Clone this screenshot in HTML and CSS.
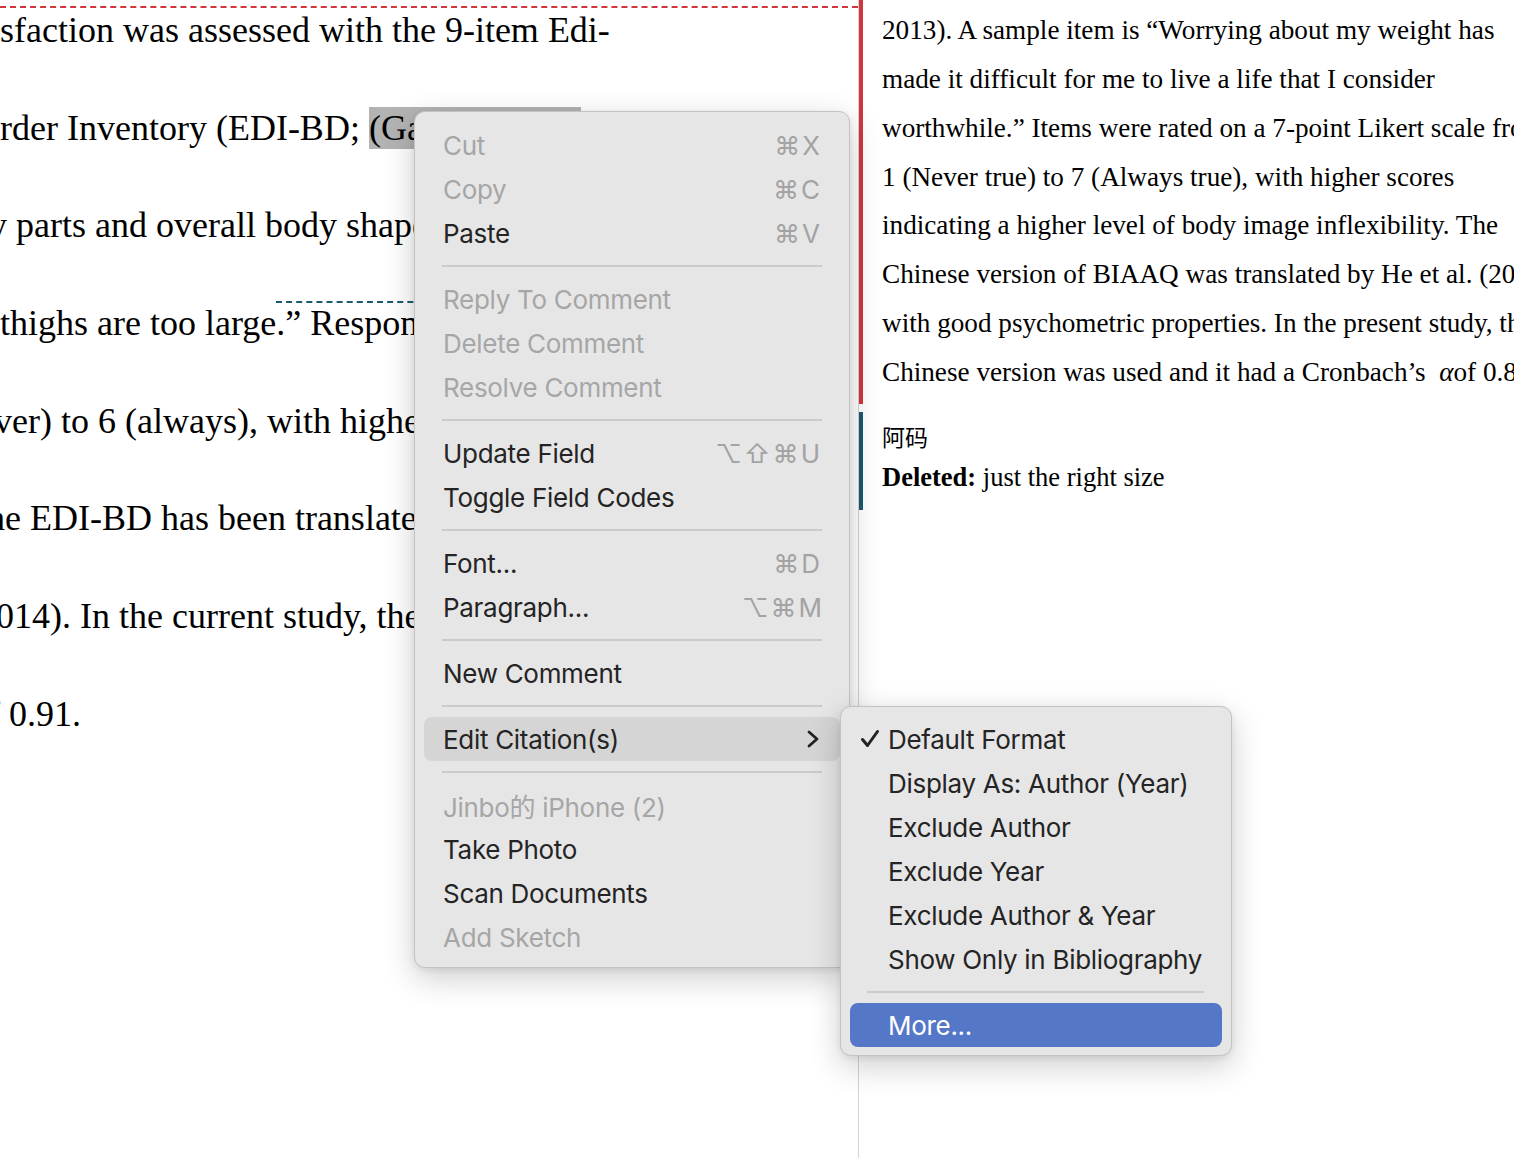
FILE: index.html
```html
<!DOCTYPE html>
<html>
<head>
<meta charset="utf-8">
<link rel="stylesheet" href="styles.css">
</head>
<body>
<div class="doc">
  <div class="left">
    <div class="connector"></div>
    <div class="lines">
      <div class="ln l1">sfaction was assessed with the 9-item Edi-</div>
      <div class="ln l2">rder Inventory (EDI-BD; <span class="sel">(Garner, 2004)</span>. The subscale</div>
      <div class="ln l3">y parts and overall body shape</div>
      <div class="ln l4">thighs are too large<span class="anchor">.” Respondents rated</span></div>
      <div class="ln l5">ver) to 6 (always), with higher scores</div>
      <div class="ln l6">he EDI-BD has been translated</div>
      <div class="ln l7">014). In the current study, the</div>
      <div class="ln l8">f 0.91.</div>
    </div>
  </div>
  <div class="right">
    <div class="balloon red">
      <div class="rl">2013). A sample item is “Worrying about my weight has</div>
      <div class="rl">made it difficult for me to live a life that I consider</div>
      <div class="rl">worthwhile.” Items were rated on a 7-point Likert scale from</div>
      <div class="rl">1 (Never true) to 7 (Always true), with higher scores</div>
      <div class="rl">indicating a higher level of body image inflexibility. The</div>
      <div class="rl">Chinese version of BIAAQ was translated by He et al. (2021)</div>
      <div class="rl">with good psychometric properties. In the present study, the</div>
      <div class="rl">Chinese version was used and it had a Cronbach’s&nbsp; <i>α</i>of 0.89.</div>
    </div>
    <div class="balloon teal">
      <div class="cl author">阿码</div>
      <div class="cl"><b>Deleted:</b> just the right size</div>
    </div>
  </div>
</div>

<div class="menu">
  <div class="item dis"><span>Cut</span><span class="sc"><span>⌘</span><span>X</span></span></div>
  <div class="item dis"><span>Copy</span><span class="sc"><span>⌘</span><span>C</span></span></div>
  <div class="item"><span>Paste</span><span class="sc"><span>⌘</span><span>V</span></span></div>
  <div class="sep"></div>
  <div class="item dis"><span>Reply To Comment</span></div>
  <div class="item dis"><span>Delete Comment</span></div>
  <div class="item dis"><span>Resolve Comment</span></div>
  <div class="sep"></div>
  <div class="item"><span>Update Field</span><span class="sc"><span>⌥</span><span>⇧</span><span>⌘</span><span>U</span></span></div>
  <div class="item"><span>Toggle Field Codes</span></div>
  <div class="sep"></div>
  <div class="item"><span>Font...</span><span class="sc"><span>⌘</span><span>D</span></span></div>
  <div class="item"><span>Paragraph...</span><span class="sc wide"><span>⌥</span><span>⌘</span><span>M</span></span></div>
  <div class="sep"></div>
  <div class="item"><span>New Comment</span></div>
  <div class="sep"></div>
  <div class="item hot"><span>Edit Citation(s)</span>
    <svg class="chev" width="12" height="18" viewBox="0 0 12 18"><path d="M2 2 L10 9 L2 16" fill="none" stroke="#222" stroke-width="2.8" stroke-linecap="round" stroke-linejoin="round"/></svg>
  </div>
  <div class="sep"></div>
  <div class="item dis"><span>Jinbo的 iPhone (2)</span></div>
  <div class="item"><span>Take Photo</span></div>
  <div class="item"><span>Scan Documents</span></div>
  <div class="item dis"><span>Add Sketch</span></div>
</div>

<div class="submenu">
  <div class="sitem"><span class="chk"><svg width="20" height="20" viewBox="0 0 20 20"><path d="M2.5 10.5 L7.5 16.5 L17.5 2.5" fill="none" stroke="#222" stroke-width="3" stroke-linecap="round" stroke-linejoin="round"/></svg></span><span>Default Format</span></div>
  <div class="sitem"><span class="chk"></span><span>Display As: Author (Year)</span></div>
  <div class="sitem"><span class="chk"></span><span>Exclude Author</span></div>
  <div class="sitem"><span class="chk"></span><span>Exclude Year</span></div>
  <div class="sitem"><span class="chk"></span><span>Exclude Author &amp; Year</span></div>
  <div class="sitem"><span class="chk"></span><span>Show Only in Bibliography</span></div>
  <div class="ssep"></div>
  <div class="sitem sel-blue"><span class="chk"></span><span>More...</span></div>
</div>
</body>
</html>
```

FILE: styles.css
```css
html, body {
  margin: 0;
  padding: 0;
  background: #ffffff;
  width: 1514px;
  height: 1158px;
  overflow: hidden;
}

.doc {
  display: flex;
  width: 1514px;
  height: 1158px;
}

.left {
  position: relative;
  width: 858px;
  flex: none;
  overflow: hidden;
  font-family: "Liberation Serif", "Times New Roman", serif;
  font-size: 36px;
  color: #000;
}

.connector {
  position: absolute;
  left: 0;
  right: 0;
  top: 6px;
  border-top: 2px dashed #d2353c;
}

.lines {
  margin-top: -18px;
}

.ln {
  line-height: 97.7px;
  height: 97.7px;
  white-space: nowrap;
}

.l3 { margin-left: -11px; }
.l5 { margin-left: -6px; }
.l6 { margin-left: -13px; }
.l7 { margin-left: -4px; }
.l8 { margin-left: -12px; }

.sel {
  background: #b3b3b3;
  padding: 1px 0 1px;
}

.anchor {
  border-top: 2px dashed #1b5a6e;
}

.right {
  flex: 1;
  border-left: 1px solid #d4d4d4;
  overflow: hidden;
  font-family: "Liberation Serif", "Times New Roman", serif;
  color: #000;
}

.balloon {
  border-left: 4px solid #d2353c;
  padding-left: 19px;
}

.balloon.red {
  padding-top: 6px;
  padding-bottom: 7px;
  margin-bottom: 8px;
}

.balloon.teal {
  border-left-color: #1b5a6e;
  padding-top: 4px;
  padding-bottom: 12px;
}

.rl {
  font-size: 27.2px;
  line-height: 48.86px;
  height: 48.86px;
  white-space: nowrap;
}

.cl {
  font-size: 26.5px;
  line-height: 41px;
  height: 41px;
  white-space: nowrap;
}

.cl.author {
  font-family: "Noto Sans CJK SC", serif;
  font-size: 23px;
}

/* context menu */
.menu, .submenu {
  position: absolute;
  box-sizing: border-box;
  background: #e6e6e6;
  border: 1px solid #c3c3c3;
  border-radius: 11px;
  box-shadow: 0 10px 32px rgba(0, 0, 0, 0.2), 0 2px 6px rgba(0, 0, 0, 0.08);
  font-family: "Inter", "Noto Sans CJK SC", sans-serif;
  font-size: 26px;
  letter-spacing: -0.3px;
  color: #242424;
}

.menu {
  left: 414px;
  top: 111px;
  width: 436px;
  padding: 11px 9px 8px;
}

.item {
  height: 44px;
  display: flex;
  align-items: center;
  justify-content: space-between;
  padding: 0 20px 0 19px;
  border-radius: 8px;
  white-space: nowrap;
}

.item.dis {
  color: #a6a6a6;
}

.item.hot {
  background: #d5d5d5;
}

.sc {
  display: flex;
  gap: 2px;
  color: #a3a3a3;
  letter-spacing: 0;
  font-family: "Inter", "DejaVu Sans", sans-serif;
}

.sc.wide {
  margin-right: -2px;
}

.sep {
  height: 2px;
  margin: 10px 18px;
  background: #cbcbcb;
}

.chev {
  display: block;
  margin-right: 1px;
}

.submenu {
  left: 840px;
  top: 706px;
  width: 392px;
  padding: 10px 9px 8px;
  z-index: 2;
}

.sitem {
  height: 44px;
  display: flex;
  align-items: center;
  padding-left: 8px;
  border-radius: 8px;
  white-space: nowrap;
}

.chk {
  width: 30px;
  flex: none;
  display: flex;
  align-items: center;
}

.chk svg {
  display: block;
  margin-left: 2px;
}

.ssep {
  height: 2px;
  margin: 10px 18px 10px 17px;
  background: #cbcbcb;
}

.sitem.sel-blue {
  background: #5477c8;
  color: #ffffff;
}
```
